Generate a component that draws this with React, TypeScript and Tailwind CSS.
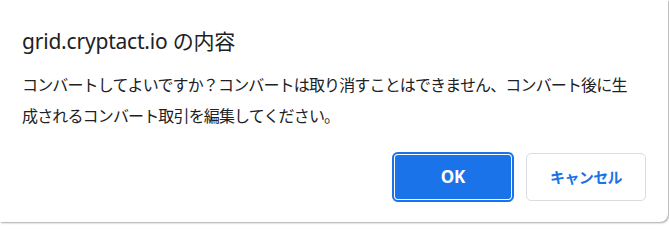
import React from "react";

export default function App() {
  return (
    <div className="w-[669px] h-[226px] bg-white overflow-hidden">
      <div className="w-[668px] h-[222px] bg-white rounded-br-[8px] shadow-[1px_1px_2px_rgba(0,0,0,0.35)] flex flex-col pl-[22px] pr-[22px] text-[#202124] font-['Noto_Sans','Noto_Sans_CJK_JP',sans-serif]">
        <div className="mt-[27px] text-[21px] leading-[28px] tracking-[-0.2px]">grid.cryptact.io の内容</div>
        <div className="mt-[14px] w-[616px] text-[16px] leading-[31px] tracking-[-0.85px] font-['Noto_Sans_CJK_JP',sans-serif]">
          コンバートしてよいですか？コンバートは取り消すことはできません、コンバート後に生成されるコンバート取引を編集してください。
        </div>
        <div className="mt-[21px] flex justify-end gap-[12px]">
          <button className="w-[122px] h-[50px] rounded-[6px] bg-[#1a73e8] shadow-[inset_0_0_0_2px_#1a73e8,inset_0_0_0_3px_#ffffff] text-white text-[17px] font-bold font-['Noto_Sans',sans-serif] flex items-center justify-center">
            OK
          </button>
          <button className="mt-[1px] w-[120px] h-[48px] rounded-[5px] bg-white border border-[#dadce0] text-[#1a73e8] text-[15px] tracking-[-0.6px] font-semibold font-['Noto_Sans_CJK_JP',sans-serif] flex items-center justify-center">
            キャンセル
          </button>
        </div>
      </div>
    </div>
  );
}
